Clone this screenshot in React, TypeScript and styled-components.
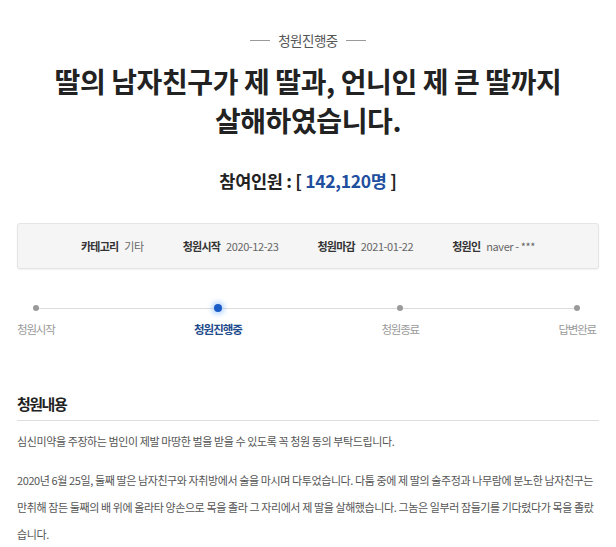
import React from 'react';
import styled, { createGlobalStyle } from 'styled-components';

const STEPS = [
  { label: '청원시작', active: false },
  { label: '청원진행중', active: true },
  { label: '청원종료', active: false },
  { label: '답변완료', active: false },
];

const INFO = [
  { label: '카테고리', value: '기타' },
  { label: '청원시작', value: '2020-12-23' },
  { label: '청원마감', value: '2021-01-22' },
  { label: '청원인', value: 'naver - ***' },
];

const App = () => {
  return (
    <>
      <GlobalStyle />
      <Page>
        <Status>
          <Dash />
          <StatusText>청원진행중</StatusText>
          <Dash />
        </Status>
        <Title>
          딸의 남자친구가 제 딸과, 언니인 제 큰 딸까지
          <br />
          살해하였습니다.
        </Title>
        <Count>
          참여인원 : [ <CountNum>142,120명</CountNum> ]
        </Count>

        <InfoBox>
          {INFO.map(item => (
            <InfoItem key={item.label}>
              <InfoLabel>{item.label}</InfoLabel>
              <InfoValue>{item.value}</InfoValue>
            </InfoItem>
          ))}
        </InfoBox>

        <Steps>
          {STEPS.map(step => (
            <Step key={step.label}>
              <Dot $active={step.active} />
              <StepLabel $active={step.active}>{step.label}</StepLabel>
            </Step>
          ))}
        </Steps>

        <SectionTitle>청원내용</SectionTitle>
        <Body>
          <Para>
            심신미약을 주장하는 범인이 제발 마땅한 벌을 받을 수 있도록 꼭 청원 동의 부탁드립니다.
          </Para>
          <Para>
            2020년 6월 25일, 둘째 딸은 남자친구와 자취방에서 술을 마시며 다투었습니다. 다툼 중에 제 딸의 술주정과 나무람에 분노한 남자친구는
            <br />
            만취해 잠든 둘째의 배 위에 올라타 양손으로 목을 졸라 그 자리에서 제 딸을 살해했습니다. 그놈은 일부러 잠들기를 기다렸다가 목을 졸랐
            <br />
            습니다.
          </Para>
        </Body>
      </Page>
    </>
  );
};

const GlobalStyle = createGlobalStyle`
  html, body {
    margin: 0;
    padding: 0;
    background: #ffffff;
  }
  body {
    font-family: "Noto Sans CJK KR", "Noto Sans", sans-serif;
    color: #333;
  }
`;

const Page = styled.div`
  display: flex;
  flex-direction: column;
  padding: 30px 17px 0;
  width: 616px;
  box-sizing: border-box;
`;

const Status = styled.div`
  display: flex;
  align-items: center;
  justify-content: center;
  gap: 8px;
  height: 20px;
`;

const Dash = styled.span`
  width: 20px;
  height: 1px;
  background: #9a9a9a;
`;

const StatusText = styled.span`
  font-size: 13.5px;
  color: #555;
  letter-spacing: -0.5px;
  line-height: 20px;
`;

const Title = styled.h1`
  margin: 12px 0 0;
  font-size: 28px;
  font-weight: 700;
  line-height: 39px;
  text-align: center;
  color: #222;
  letter-spacing: -0.4px;
`;

const Count = styled.div`
  margin-top: 29px;
  text-align: center;
  font-size: 17.5px;
  font-weight: 700;
  line-height: 24px;
  color: #222;
  letter-spacing: -0.3px;
`;

const CountNum = styled.span`
  color: #1f4f9e;
`;

const InfoBox = styled.div`
  margin-top: 30px;
  height: 46px;
  display: flex;
  align-items: center;
  justify-content: center;
  gap: 39px;
  background: #f5f5f5;
  border: 1px solid #e4e4e4;
  border-radius: 3px;
  box-shadow: 0 1px 2px rgba(0, 0, 0, 0.06);
  box-sizing: border-box;
`;

const InfoItem = styled.div`
  display: flex;
  align-items: center;
  gap: 6px;
  font-size: 11px;
  line-height: 16px;
`;

const InfoLabel = styled.span`
  font-weight: 700;
  color: #333;
  letter-spacing: -0.8px;
`;

const InfoValue = styled.span`
  color: #666;
  letter-spacing: -0.4px;
`;

const Steps = styled.div`
  position: relative;
  margin-top: 35px;
  padding-right: 3px;
  display: flex;
  justify-content: space-between;

  &::before {
    content: '';
    position: absolute;
    top: 4px;
    left: 18px;
    right: 22px;
    height: 1px;
    background: #dcdcdc;
  }
`;

const Step = styled.div`
  display: flex;
  flex-direction: column;
  align-items: center;
  gap: 9px;
  z-index: 1;
`;

const Dot = styled.span<{ $active: boolean }>`
  width: ${p => (p.$active ? '8px' : '6px')};
  height: ${p => (p.$active ? '8px' : '6px')};
  margin-top: ${p => (p.$active ? '0' : '1px')};
  margin-bottom: ${p => (p.$active ? '0' : '1px')};
  border-radius: 50%;
  background: ${p => (p.$active ? '#1a5cc8' : '#9a9a9a')};
  box-shadow: ${p => (p.$active ? '0 0 4px 3px rgba(90, 160, 255, 0.35)' : 'none')};
`;

const StepLabel = styled.span<{ $active: boolean }>`
  font-size: 11.5px;
  line-height: 16px;
  font-weight: ${p => (p.$active ? 700 : 400)};
  color: ${p => (p.$active ? '#1e4b8c' : '#9a9a9a')};
  letter-spacing: ${p => (p.$active ? '-1px' : '-1.2px')};
`;

const SectionTitle = styled.h2`
  margin: 56px 0 0;
  padding-bottom: 5px;
  font-size: 15px;
  font-weight: 700;
  line-height: 22px;
  color: #222;
  letter-spacing: -1.5px;
  border-bottom: 1px solid #dedede;
`;

const Body = styled.div`
  display: flex;
  flex-direction: column;
  gap: 12px;
  margin-top: 7px;
`;

const Para = styled.p`
  margin: 0;
  font-size: 11px;
  line-height: 27px;
  color: #555;
  letter-spacing: -0.4px;
  white-space: nowrap;
`;

export default App;
